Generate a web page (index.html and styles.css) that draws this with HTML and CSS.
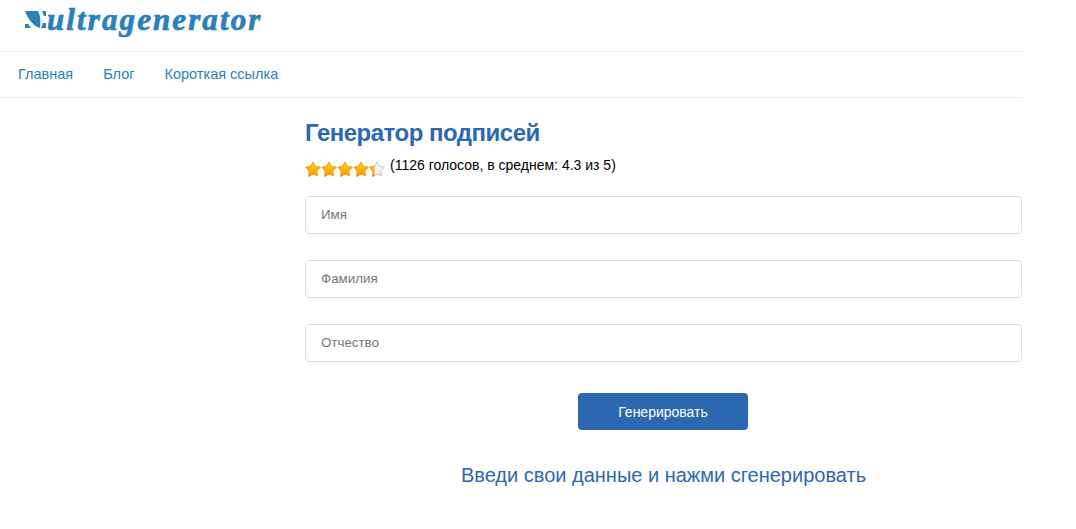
FILE: index.html
```html
<!DOCTYPE html>
<html lang="ru">
<head>
<meta charset="utf-8">
<title>Генератор подписей</title>
<link rel="stylesheet" href="styles.css">
</head>
<body>
<svg class="defs" width="0" height="0">
  <defs>
    <linearGradient id="gold" x1="0" y1="0" x2="0" y2="1">
      <stop offset="0" stop-color="#ffd21a"/>
      <stop offset="1" stop-color="#ff9500"/>
    </linearGradient>
    <linearGradient id="pale" x1="0" y1="0" x2="0" y2="1">
      <stop offset="0" stop-color="#ffffff"/>
      <stop offset="1" stop-color="#eeeeee"/>
    </linearGradient>
    <clipPath id="part"><rect x="0" y="0" width="5.5" height="16"/></clipPath>
    <path id="star-shape" d="M8 1l2.3 4.3 4.9.9-3.4 3.5.7 4.9L8 13l-4.5 2.6.7-4.9L.8 6.2l4.9-.9z"/>
  </defs>
</svg>
<div class="page">
  <header class="brand">
    <svg class="mark" width="21" height="18" viewBox="0 0 21 18">
      <path class="mark-fill" d="M0 0H13C15 4 16 10 15 17C8 15 3 8 0 0Z"/>
      <path class="mark-fill" d="M17 0H21V5H19Z"/>
      <path class="mark-fill" d="M0 13H3L6 17H0Z"/>
      <path class="mark-fill" d="M18 12H21V17H16Z"/>
    </svg>
    <span class="brand-name">ultragenerator</span>
  </header>
  <nav class="nav">
    <a class="nav-link" href="#">Главная</a>
    <a class="nav-link" href="#">Блог</a>
    <a class="nav-link" href="#">Короткая ссылка</a>
  </nav>
  <main class="layout">
    <div class="side"></div>
    <section class="content">
      <h1 class="title">Генератор подписей</h1>
      <div class="rating">
        <div class="stars">
          <svg class="star" viewBox="0 0 16 16"><use class="star-on" href="#star-shape"/></svg>
          <svg class="star" viewBox="0 0 16 16"><use class="star-on" href="#star-shape"/></svg>
          <svg class="star" viewBox="0 0 16 16"><use class="star-on" href="#star-shape"/></svg>
          <svg class="star" viewBox="0 0 16 16"><use class="star-on" href="#star-shape"/></svg>
          <svg class="star" viewBox="0 0 16 16"><use class="star-off" href="#star-shape"/><use class="star-on" href="#star-shape" clip-path="url(#part)"/></svg>
        </div>
        <span class="votes">(1126 голосов, в среднем: 4.3 из 5)</span>
      </div>
      <form class="form">
        <input class="field" type="text" placeholder="Имя">
        <input class="field" type="text" placeholder="Фамилия">
        <input class="field" type="text" placeholder="Отчество">
        <button class="submit" type="button">Генерировать</button>
      </form>
      <h2 class="result">Введи свои данные и нажми сгенерировать</h2>
    </section>
  </main>
</div>
</body>
</html>
```

FILE: styles.css
```css
* {
  box-sizing: border-box;
}

html,
body {
  margin: 0;
  padding: 0;
  background: #fff;
}

body {
  font-family: "Liberation Sans", Arial, sans-serif;
  font-size: 14px;
  color: #000;
}

.defs {
  position: absolute;
}

.page {
  width: 1022px;
}

.brand {
  height: 51px;
  padding: 0 0 0 25px;
  display: flex;
  align-items: flex-start;
  gap: 1px;
  overflow: hidden;
}

.mark {
  margin-top: 11px;
  flex: none;
}

.mark-fill {
  fill: #2a80b9;
}

.brand-name {
  font-family: "Liberation Serif", serif;
  font-weight: 700;
  font-style: italic;
  font-size: 31px;
  line-height: 40px;
  letter-spacing: 2.1px;
  color: #2a80b9;
  -webkit-text-stroke: 0.7px #2a80b9;
}

.nav {
  height: 47px;
  border-top: 1px solid #eee;
  border-bottom: 1px solid #eee;
  padding: 0 0 2px 18px;
  display: flex;
  align-items: center;
  gap: 30px;
}

.nav-link {
  font-size: 14.5px;
  line-height: 20px;
  color: #2a80b9;
  text-decoration: none;
}

.layout {
  display: grid;
  grid-template-columns: 305px 717px;
}

.title {
  margin: 21px 0 0;
  font-size: 24px;
  line-height: 28px;
  font-weight: 700;
  letter-spacing: -0.5px;
  color: #2b68b1;
}

.rating {
  margin-top: 9px;
  height: 21px;
  display: flex;
  align-items: flex-start;
  gap: 5px;
}

.stars {
  display: flex;
  margin-top: 5px;
}

.star {
  width: 16px;
  height: 16px;
  display: block;
}

.star-on {
  fill: url(#gold);
  stroke: #f59a00;
  stroke-width: 1;
  stroke-linejoin: round;
}

.star-off {
  fill: url(#pale);
  stroke: #c4c4c4;
  stroke-width: 1;
  stroke-linejoin: round;
}

.votes {
  font-size: 14px;
  line-height: 16px;
  margin-top: 1px;
}

.form {
  margin-top: 19px;
  display: flex;
  flex-direction: column;
  gap: 26px;
}

.field {
  width: 100%;
  height: 38px;
  padding: 0 15px 2px;
  border: 1px solid #ddd;
  border-radius: 4px;
  background: #fff;
  font-family: inherit;
  font-size: 13.33px;
  color: #555;
  outline: none;
}

.field::placeholder {
  color: #777;
  opacity: 1;
}

.submit {
  width: 170px;
  height: 37px;
  margin: 5px 0 0 273px;
  border: 0;
  border-radius: 4px;
  background: #2b68b1;
  color: #fff;
  font-family: inherit;
  font-size: 14px;
}

.result {
  margin: 33px 0 0;
  text-align: center;
  font-size: 20px;
  line-height: 24px;
  font-weight: 400;
  color: #2b68b1;
}
```
